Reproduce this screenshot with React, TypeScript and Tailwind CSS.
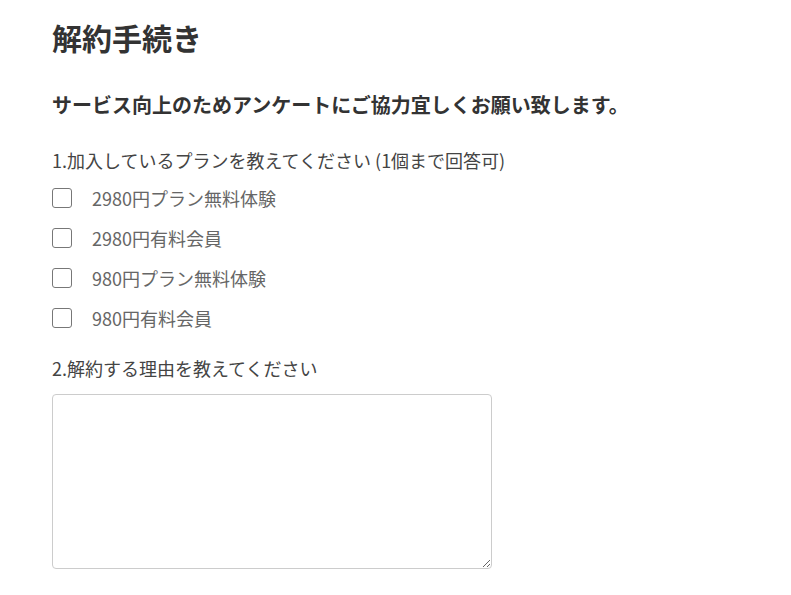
export default function App() {
  const plans = ["2980円プラン無料体験", "2980円有料会員", "980円プラン無料体験", "980円有料会員"];

  return (
    <div className="min-h-screen bg-white pl-[52px] pt-[14px] text-[#333] font-['Noto_Sans_CJK_JP',sans-serif]">
      <h1 className="text-[30px] font-bold leading-[46px]">解約手続き</h1>

      <h2 className="mt-[31px] text-[20px] font-bold leading-[28px]">
        サービス向上のためアンケートにご協力宜しくお願い致します。
      </h2>

      <p className="mt-[28px] text-[18px] leading-[26px] text-[#444]">
        1.加入しているプランを教えてください (1個まで回答可)
      </p>

      <div className="mt-[15px] flex flex-col gap-[20px]">
        {plans.map((p) => (
          <label key={p} className="flex items-center gap-[20px] h-[20px]">
            <input
              type="checkbox"
              className="appearance-none w-[20px] h-[20px] rounded-[3px] border-[1.5px] border-[#777] bg-white"
            />
            <span className="text-[18px] leading-[20px] text-[#666]">{p}</span>
          </label>
        ))}
      </div>

      <p className="mt-[27px] text-[18px] leading-[26px] text-[#444]">2.解約する理由を教えてください</p>

      <textarea className="mt-[13px] block w-[440px] h-[175px] rounded-[4px] border border-[#ccc] bg-white outline-none" />
    </div>
  );
}
